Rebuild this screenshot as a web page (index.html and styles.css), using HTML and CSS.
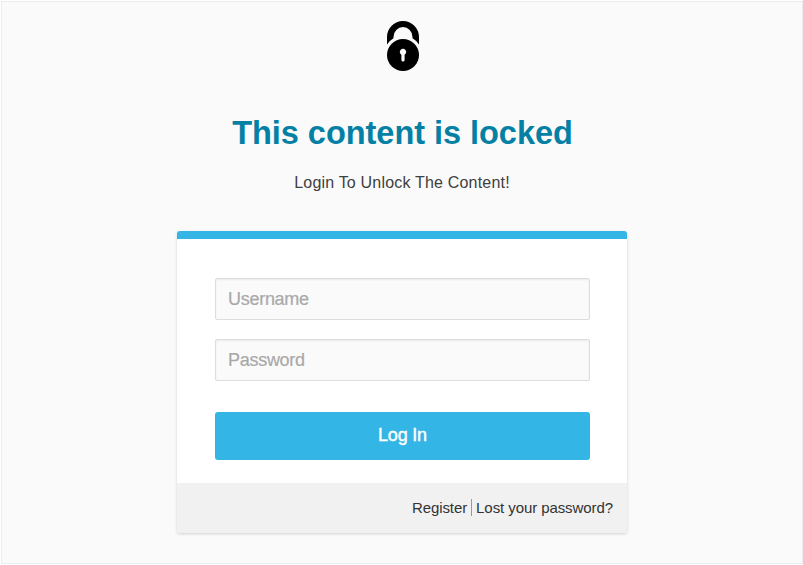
FILE: index.html
```html
<!DOCTYPE html>
<html lang="en">
<head>
    <meta charset="UTF-8">
    <title>This content is locked</title>
    <link rel="stylesheet" href="styles.css">
</head>
<body>
    <div class="locker">
        <!-- lock icon -->
        <svg class="lock-icon" width="34" height="52" viewBox="0 0 34 52">
            <path fill="#000" d="M1 24.500V17a16 16 0 0 1 32 0V24.500Q30.500 20.500 26.500 18.200V17a9.500 10 0 0 0-19 0V18.200Q3.500 20.500 1 24.500Z"/>
            <circle cx="17" cy="35" r="16" fill="#000"/>
            <path fill="#fafafa" d="M15.400 34.800a3.200 3.200 0 1 1 3.200 0V40a1.600 1.600 0 0 1-3.200 0Z"/>
        </svg>

        <h1 class="title">This content is locked</h1>
        <p class="message">Login To Unlock The Content!</p>

        <!-- login box -->
        <form class="login">
            <div class="fields">
                <input class="field" type="text" placeholder="Username">
                <input class="field" type="password" placeholder="Password">
                <button class="submit" type="button">Log In</button>
            </div>
            <div class="links">
                <a class="link" href="#">Register</a>
                <a class="link lost" href="#">Lost your password?</a>
            </div>
        </form>
    </div>
</body>
</html>
```

FILE: styles.css
```css
*{
    margin: 0;
    padding: 0;
    box-sizing: border-box;
}

body{
    padding: 1px 0 0 1px;
    background-color: #fff;
    font-family: "Liberation Sans", Arial, sans-serif;
}

/* outer box */
.locker{
    width: 802px;
    height: 563px;
    padding-top: 18px;
    background-color: #fafafa;
    border: 1px solid #ececec;
    display: flex;
    flex-flow: column;
    align-items: center;
}

.lock-icon{
    display: block;
    margin-left: 2px;
}

.title{
    margin-top: 41px;
    margin-left: 1px;
    line-height: 40px;
    font-size: 32.500px;
    letter-spacing: -0.030px;
    color: #0480a4;
}

.message{
    margin-top: 20px;
    line-height: 20px;
    font-size: 16px;
    letter-spacing: 0.190px;
    color: #404040;
}

/* login box */
.login{
    width: 450px;
    margin-top: 38px;
    background-color: #fff;
    border-top: 8px solid #33b5e5;
    border-radius: 3px;
    box-shadow: 0 1px 3px rgba(0, 0, 0, 0.17);
}

.fields{
    padding: 39px 37px 23px 38px;
}

.field{
    display: block;
    width: 100%;
    height: 42px;
    margin-bottom: 19px;
    padding: 0 12px;
    font-family: inherit;
    font-size: 18px;
    letter-spacing: -0.280px;
    background-color: #fafafa;
    border: 1px solid #ddd;
    border-radius: 2px;
    box-shadow: inset 0 1px 2px rgba(0, 0, 0, 0.07);
}

.field::placeholder{
    color: #a9a9a9;
    -webkit-text-stroke: 0.200px #a9a9a9;
}

.submit{
    display: block;
    width: 100%;
    height: 48px;
    margin-top: 31px;
    padding-bottom: 2px;
    font-family: inherit;
    font-size: 18px;
    letter-spacing: -0.200px;
    color: #fff;
    -webkit-text-stroke: 0.400px #fff;
    background-color: #33b5e5;
    border: none;
    border-radius: 3px;
}

/* bottom links */
.links{
    height: 50px;
    padding: 0 14px 2px 0;
    background-color: #f1f1f1;
    border-radius: 0 0 3px 3px;
    display: flex;
    align-items: center;
    justify-content: flex-end;
}

.link{
    line-height: 17px;
    font-size: 15px;
    letter-spacing: -0.080px;
    color: #333;
    text-decoration: none;
}

.lost{
    margin-left: 4px;
    padding-left: 4px;
    border-left: 1px solid #999;
}
```
